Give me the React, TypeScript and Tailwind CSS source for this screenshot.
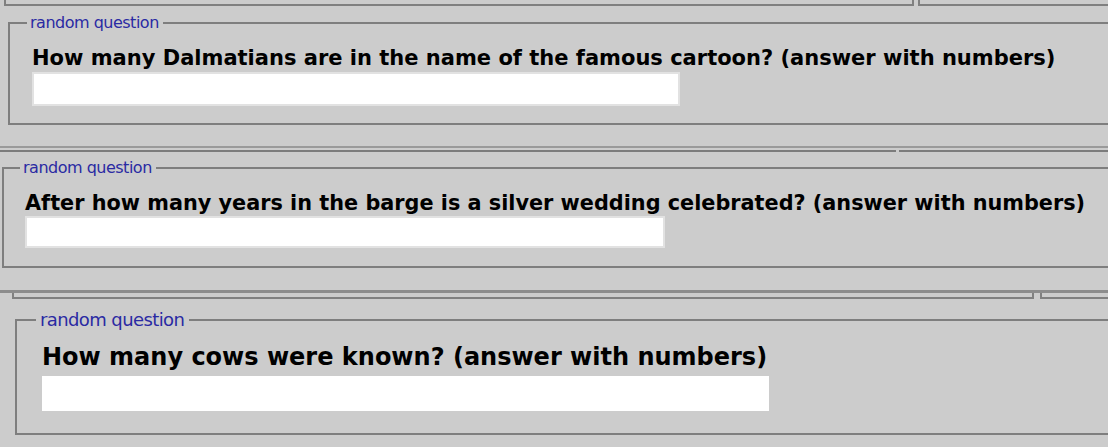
import React from "react";

type Question = {
  text: string;
};

const questions: Question[] = [
  { text: "How many Dalmatians are in the name of the famous cartoon? (answer with numbers)" },
  { text: "After how many years in the barge is a silver wedding celebrated? (answer with numbers)" },
  { text: "How many cows were known? (answer with numbers)" },
];

export default function App() {
  return (
    <div className="w-[1108px] h-[447px] overflow-hidden bg-[#cccccc] font-['DejaVu_Sans',Verdana,sans-serif] text-black">
      {/* Strip 1 */}
      <section className="h-[146px] flex flex-col">
        {/* cut-off boxes above */}
        <div className="flex h-[6px]">
          <div className="ml-[4px] w-[910px] border-x-2 border-b-2 border-[#808080]" />
          <div className="ml-[4px] flex-1 border-l-2 border-b-2 border-[#808080]" />
        </div>
        <fieldset className="ml-[8px] mt-[8px] w-[1200px] border-2 border-[#7e7e7e] pl-[17px] pb-[17px]">
          <legend className="pl-[3px] pr-[4px] text-[16px] leading-[18px] tracking-[-0.5px] text-[#2a2aa3]">random question</legend>
          <div className="pl-[5px]">
            <p className="mt-[14px] text-[21px] leading-[24px] font-bold whitespace-nowrap">{questions[0].text}</p>
            <input type="text" className="mt-[2px] block w-[648px] h-[34px] bg-white border-2 border-[#e2e2e2] outline-none" />
          </div>
        </fieldset>
      </section>

      {/* Strip 2 */}
      <section className="h-[144px] flex flex-col">
        <div className="h-[2px] bg-[#9a9a9a]" />
        <div className="flex h-[4px]">
          <div className="w-[896px] border-b-2 border-[#7c7c7c]" />
          <div className="ml-[3px] flex-1 border-b-2 border-[#7c7c7c]" />
        </div>
        <fieldset className="ml-[2px] mt-[7px] w-[1200px] border-2 border-[#7e7e7e] pl-[16px] pb-[18px]">
          <legend className="pl-[3px] pr-[4px] text-[16px] leading-[18px] tracking-[-0.5px] text-[#2a2aa3]">random question</legend>
          <div className="pl-[5px]">
            <p className="mt-[14px] text-[20.8px] leading-[24px] font-bold whitespace-nowrap">{questions[1].text}</p>
            <input type="text" className="mt-[1px] block w-[640px] h-[32px] bg-white border-2 border-[#e2e2e2] outline-none" />
          </div>
        </fieldset>
      </section>

      {/* Strip 3 */}
      <section className="h-[157px] flex flex-col">
        <div className="h-[3px] bg-[#8c8c8c]" />
        <div className="flex h-[6px]">
          <div className="ml-[12px] w-[1022px] border-x-2 border-b-2 border-[#808080]" />
          <div className="ml-[6px] flex-1 border-l-2 border-b-2 border-[#808080]" />
        </div>
        <fieldset className="ml-[15px] mt-[11px] w-[1200px] border-2 border-[#7e7e7e] pl-[19px] pb-[22px]">
          <legend className="pl-[4px] pr-[5px] text-[18px] leading-[20px] tracking-[-0.6px] text-[#2a2aa3]">random question</legend>
          <div className="pl-[6px]">
            <p className="mt-[13px] text-[24px] leading-[28px] font-bold whitespace-nowrap">{questions[2].text}</p>
            <input type="text" className="mt-[5px] block w-[727px] h-[35px] bg-white border-0 outline-none" />
          </div>
        </fieldset>
      </section>
    </div>
  );
}
